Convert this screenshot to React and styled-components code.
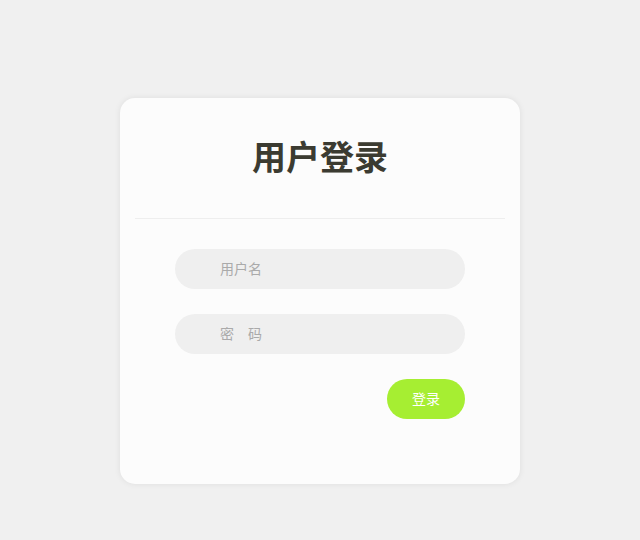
import React, { useState } from 'react';
import styled, { createGlobalStyle } from 'styled-components';

const GlobalStyle = createGlobalStyle`
  html, body {
    margin: 0;
    padding: 0;
    background-color: #f0f0f0;
    font-family: 'Noto Sans CJK SC', 'Microsoft YaHei', sans-serif;
  }
`;

const Page = styled.div`
  min-height: 540px;
  padding-top: 98px;
  box-sizing: border-box;
`;

const Card = styled.div`
  width: 400px;
  margin: 0 auto;
  background-color: #fcfcfc;
  border-radius: 15px;
  box-shadow: 0 0 6px rgba(0, 0, 0, 0.08);
  padding: 0 15px 65px;
  box-sizing: border-box;
`;

const Header = styled.div`
  height: 120px;
  display: flex;
  align-items: center;
  justify-content: center;
  border-bottom: 1px solid #eeeeee;
`;

const Title = styled.h2`
  margin: 0 0 4px;
  font-size: 34px;
  font-weight: 700;
  color: #3b3b31;
  line-height: 1.2;
`;

const Form = styled.form`
  display: flex;
  flex-direction: column;
  gap: 25px;
  padding: 30px 40px 0;
`;

const Input = styled.input`
  height: 40px;
  box-sizing: border-box;
  border: none;
  outline: none;
  border-radius: 20px;
  background-color: #efefef;
  padding: 0 20px 3px 45px;
  font-size: 14px;
  color: #555;
  font-family: inherit;

  &::placeholder {
    color: #aaaaaa;
  }
`;

const Actions = styled.div`
  display: flex;
  justify-content: flex-end;
`;

const SubmitButton = styled.button`
  width: 78px;
  height: 40px;
  padding: 0 0 3px;
  border: none;
  border-radius: 20px;
  background-color: #a6ee32;
  color: #ffffff;
  font-size: 14px;
  font-family: inherit;
  cursor: pointer;
`;

export default function App() {
  const [username, setUsername] = useState('');
  const [password, setPassword] = useState('');

  return (
    <Page>
      <GlobalStyle />
      <Card>
        <Header>
          <Title>用户登录</Title>
        </Header>
        <Form onSubmit={(e) => e.preventDefault()}>
          <Input
            type="text"
            placeholder="用户名"
            value={username}
            onChange={(e) => setUsername(e.target.value)}
          />
          <Input
            type="password"
            placeholder="密　码"
            value={password}
            onChange={(e) => setPassword(e.target.value)}
          />
          <Actions>
            <SubmitButton type="submit">登录</SubmitButton>
          </Actions>
        </Form>
      </Card>
    </Page>
  );
}
